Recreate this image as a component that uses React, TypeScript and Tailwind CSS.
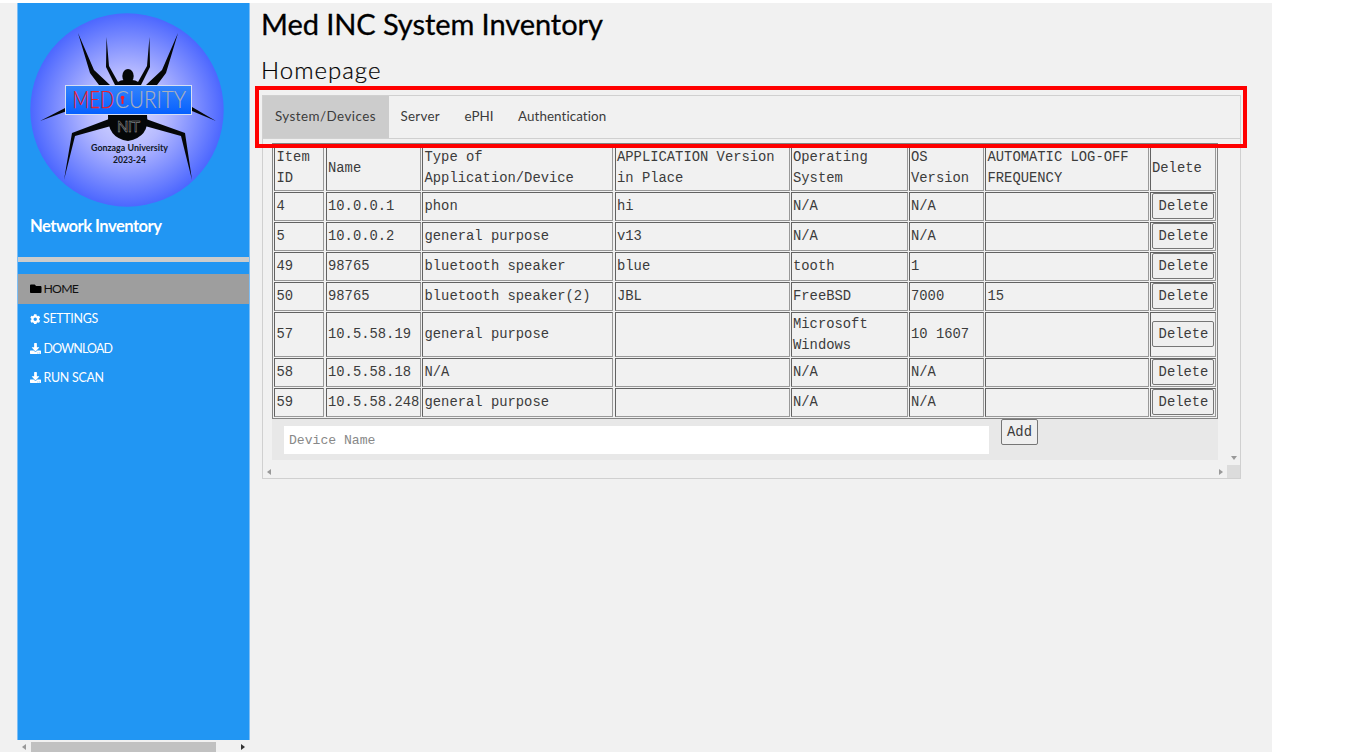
import React from "react";
import { FaFolder, FaCog, FaDownload } from "react-icons/fa";

const headers = [
  "Item ID",
  "Name",
  "Type of Application/Device",
  "APPLICATION Version in Place",
  "Operating System",
  "OS Version",
  "AUTOMATIC LOG-OFF FREQUENCY",
];

const rows = [
  ["4", "10.0.0.1", "phon", "hi", "N/A", "N/A", ""],
  ["5", "10.0.0.2", "general purpose", "v13", "N/A", "N/A", ""],
  ["49", "98765", "bluetooth speaker", "blue", "tooth", "1", ""],
  ["50", "98765", "bluetooth speaker(2)", "JBL", "FreeBSD", "7000", "15"],
  ["57", "10.5.58.19", "general purpose", "", "Microsoft Windows", "10 1607", ""],
  ["58", "10.5.58.18", "N/A", "", "N/A", "N/A", ""],
  ["59", "10.5.58.248", "general purpose", "", "N/A", "N/A", ""],
];

const rowHeights = ["h-[30px]", "h-[30px]", "h-[30px]", "h-[30px]", "h-[46px]", "h-[30px]", "h-[30px]"];
const gaps = ["mr-[2px]", "mr-px", "mr-[2px]", "mr-px", "mr-px", "mr-px", "mr-px"];
const pads = ["pl-[1.5px]", "pl-px", "pl-[1.5px]", "pl-px", "pl-px", "pl-px", "pl-[1.5px]"];
const cell =
  "flex items-center border border-t-[#626262] border-l-[#626262] border-r-[#999] border-b-[#999] mb-px overflow-hidden";
const grid = "grid grid-cols-[52px_96px_193px_176px_118px_76px_165px_66px]";

function Logo() {
  return (
    <svg className="block h-[194px] w-[194px]" viewBox="0 0 194 194">
      <defs>
        <radialGradient id="disc">
          <stop offset="0" stopColor="#dcdeff" />
          <stop offset="0.4" stopColor="#b6baff" />
          <stop offset="1" stopColor="#4c67ff" />
        </radialGradient>
        <linearGradient id="plate" x1="0" y1="0" x2="0" y2="1">
          <stop offset="0" stopColor="#3484fb" />
          <stop offset="1" stopColor="#0560ff" />
        </linearGradient>
      </defs>
      <circle cx="97" cy="97" r="96.7" fill="url(#disc)" />
      <g fill="#050708">
        <path d="M48 20 L64 57 L80 72 H69 L60 60 Z" />
        <path d="M76.5 24 L79 53 L88 69 L90 73 L85 72 L76 54 Z" />
        <path d="M119.5 24 L117 53 L108 69 L106 73 L111 72 L120 54 Z" />
        <path d="M148 20 L132 57 L116 72 H127 L136 60 Z" />
        <ellipse cx="98" cy="63" rx="5.7" ry="7" />
        <path d="M85 74 Q87 67 94 67 H102 Q109 67 111 74 Z" />
        <path d="M10 108 L37 94 V98 Z M186 108 L162 94 V98 Z" />
        <path d="M78 102 H117 Q120 124 98 128 Q77 125 78 102 Z" />
        <path d="M79 106 L42 120 L34 167 L45 123 L81 113 Z" />
        <path d="M116 106 L155 120 L162 167 L151 123 L115 113 Z" />
      </g>
      <rect x="35.5" y="72.5" width="126" height="29" fill="url(#plate)" stroke="#d6def4" />
      <g fontFamily="Lato, sans-serif" fontWeight="300" fontSize="22.5">
        <text x="42.5" y="95" fill="#ea202d" stroke="#ea202d" strokeWidth=".25" textLength="41.5" lengthAdjust="spacingAndGlyphs">MED</text>
        <text x="85" y="95" fill="#a9afbc" stroke="#a9afbc" strokeWidth=".15" textLength="71" lengthAdjust="spacingAndGlyphs">CURITY</text>
      </g>
      <circle cx="92.5" cy="84.5" r="1.8" fill="#ff1824" />
      <path d="M92.5 84 V91" stroke="#ff1824" strokeWidth="1.8" />
      <text x="87" y="119" fontFamily="Lato, sans-serif" fontSize="15" fill="#050708" stroke="#a8a8a8" strokeWidth=".45" textLength="23">NIT</text>
      <g fontFamily="Lato, sans-serif" fontSize="9" fontWeight="700" fill="#111827">
        <text x="61" y="138" textLength="77" lengthAdjust="spacingAndGlyphs">Gonzaga University</text>
        <text x="83" y="150" textLength="33" lengthAdjust="spacingAndGlyphs">2023-24</text>
      </g>
    </svg>
  );
}

function Arrow({ d, className }: { d: string; className: string }) {
  return (
    <svg viewBox="0 0 6 6" className={className}>
      <path d={d} fill="currentColor" />
    </svg>
  );
}

function Sidebar() {
  const item = "flex h-[29.6px] items-center gap-[2.5px] pl-3 pt-px text-[12.4px] text-white";
  return (
    <aside className="ml-[17px] flex w-[233px] shrink-0 flex-col">
      <div className="h-[737px] border-x border-[#7dbef5] bg-[#2196f3]">
        <div className="h-[254px] pl-3 pt-2.5">
          <Logo />
          <h4 className="pt-[7px] text-[16.6px] leading-6 font-bold tracking-[-0.53px] text-white">Network Inventory</h4>
        </div>
        <div className="h-[5px] bg-[#ccc]" />
        <nav className="pt-3">
          <a className="flex h-[30px] items-center gap-[2px] bg-[#9e9e9e] pl-3 text-[12.3px] text-[#111]">
            <FaFolder className="text-[11.5px] text-black" /><span className="tracking-[-0.8px]">HOME</span>
          </a>
          <a className={item}><FaCog className="-mt-px text-[10.5px]" /><span className="tracking-[-0.3px]">SETTINGS</span></a>
          <a className={item}><FaDownload className="-mt-px text-[11px]" /><span className="tracking-[-0.78px]">DOWNLOAD</span></a>
          <a className={item}><FaDownload className="-mt-px text-[11px]" /><span className="tracking-[-0.25px]">RUN SCAN</span></a>
        </nav>
      </div>
      <div className="flex h-3 items-end">
        <div className="flex w-[14px] justify-center pb-[2px]"><Arrow d="M5 0v6L1 3z" className="h-[6px] w-[6px] text-[#999]" /></div>
        <div className="h-[10px] w-[185px] bg-[#c1c1c1]" />
        <div className="flex flex-1 justify-end pr-1 pb-[2px]"><Arrow d="M1 0v6l4-3z" className="h-[6px] w-[6px] text-[#333]" /></div>
      </div>
    </aside>
  );
}

const btn = "shrink-0 rounded-[2px] border border-[#767676] bg-[#efefef] text-center leading-[22px]";

function Inventory() {
  return (
    <div className="flex h-[340px] w-[979px] flex-col border border-t-0 border-[#d0d0d0] font-['Liberation_Mono',monospace] text-[13.83px] leading-[20.8px] text-[#3c3c3c]">
      <div className="flex h-[326px]">
        <div className="ml-[9px] w-[946px] pt-1">
          <div className="h-[276px] border border-[#858585] pt-px pl-px">
            <div className={grid + " h-[47px]"}>
              {headers.map((h, i) => (
                <div key={h} className={cell + " " + gaps[i] + " " + pads[i]}>{h}</div>
              ))}
              <div className={cell + " pl-px"}>Delete</div>
            </div>
            {rows.map((r, ri) => (
              <div key={r[0]} className={grid + " " + rowHeights[ri]}>
                {r.map((v, i) => (
                  <div key={i} className={cell + " " + gaps[i] + " " + pads[i]}>{v}</div>
                ))}
                <div className={cell + " pl-px"}>
                  <button className={btn + " -mt-px h-[26px] w-[62px] pl-px"}>Delete</button>
                </div>
              </div>
            ))}
          </div>
          <div className="flex h-[41px] items-start bg-[#e8e8e8] pl-3">
            <input
              className="mt-[7px] h-[28px] w-[705px] bg-white pl-[5px] text-[13.1px] outline-none placeholder:text-[#888]"
              placeholder="Device Name"
            />
            <button className={btn + " ml-3 h-[26px] w-[37px]"}>Add</button>
          </div>
        </div>
        <div className="flex flex-1 items-end justify-end pr-[3px] pb-[4px]">
          <Arrow d="M0 1h6L3 5z" className="h-[6px] w-[6px] text-[#999]" />
        </div>
      </div>
      <div className="flex h-[13px] items-center justify-between pl-[3px]">
        <Arrow d="M5 0v6L1 3z" className="h-[6px] w-[6px] text-[#999]" />
        <div className="flex items-center gap-[3px]">
          <Arrow d="M1 0v6l4-3z" className="h-[6px] w-[6px] text-[#999]" />
          <div className="h-[13px] w-[13px] bg-[#dcdcdc]" />
        </div>
      </div>
    </div>
  );
}

export default function App() {
  return (
    <div className="relative h-[755px] w-[1345px] overflow-hidden bg-white pt-[3px] font-['Lato',sans-serif]">
      <div className="flex h-[749px] w-[1272px] bg-[#f1f1f1]">
        <Sidebar />
        <main className="ml-3 text-black">
          <h1 className="-ml-px h-[50px] text-[29px] leading-[42px] tracking-[-0.07px] [-webkit-text-stroke:0.3px_black]">
            Med INC System Inventory
          </h1>
          <h2 className="-ml-px h-[42px] text-[24px] leading-[34px] font-light tracking-[1px] [-webkit-text-stroke:0.2px_black]">Homepage</h2>
          <div className="flex h-[44px] w-[979px] items-stretch border border-[#d0d0d0] text-[13.4px] leading-[41px] text-[#3c3c3c]">
            <div className="w-[125.5px] bg-[#ccc] pl-3 tracking-[0.45px]">System/Devices</div>
            <div className="w-[64px] pl-3 tracking-[0.25px]">Server</div>
            <div className="w-[54px] pl-3">ePHI</div>
            <div className="pl-[11.5px] tracking-[0.08px]">Authentication</div>
          </div>
          <Inventory />
        </main>
      </div>
      <div className="pointer-events-none absolute top-[86px] left-[255px] h-[62px] w-[992px] border-4 border-[#ff0000]" />
    </div>
  );
}
